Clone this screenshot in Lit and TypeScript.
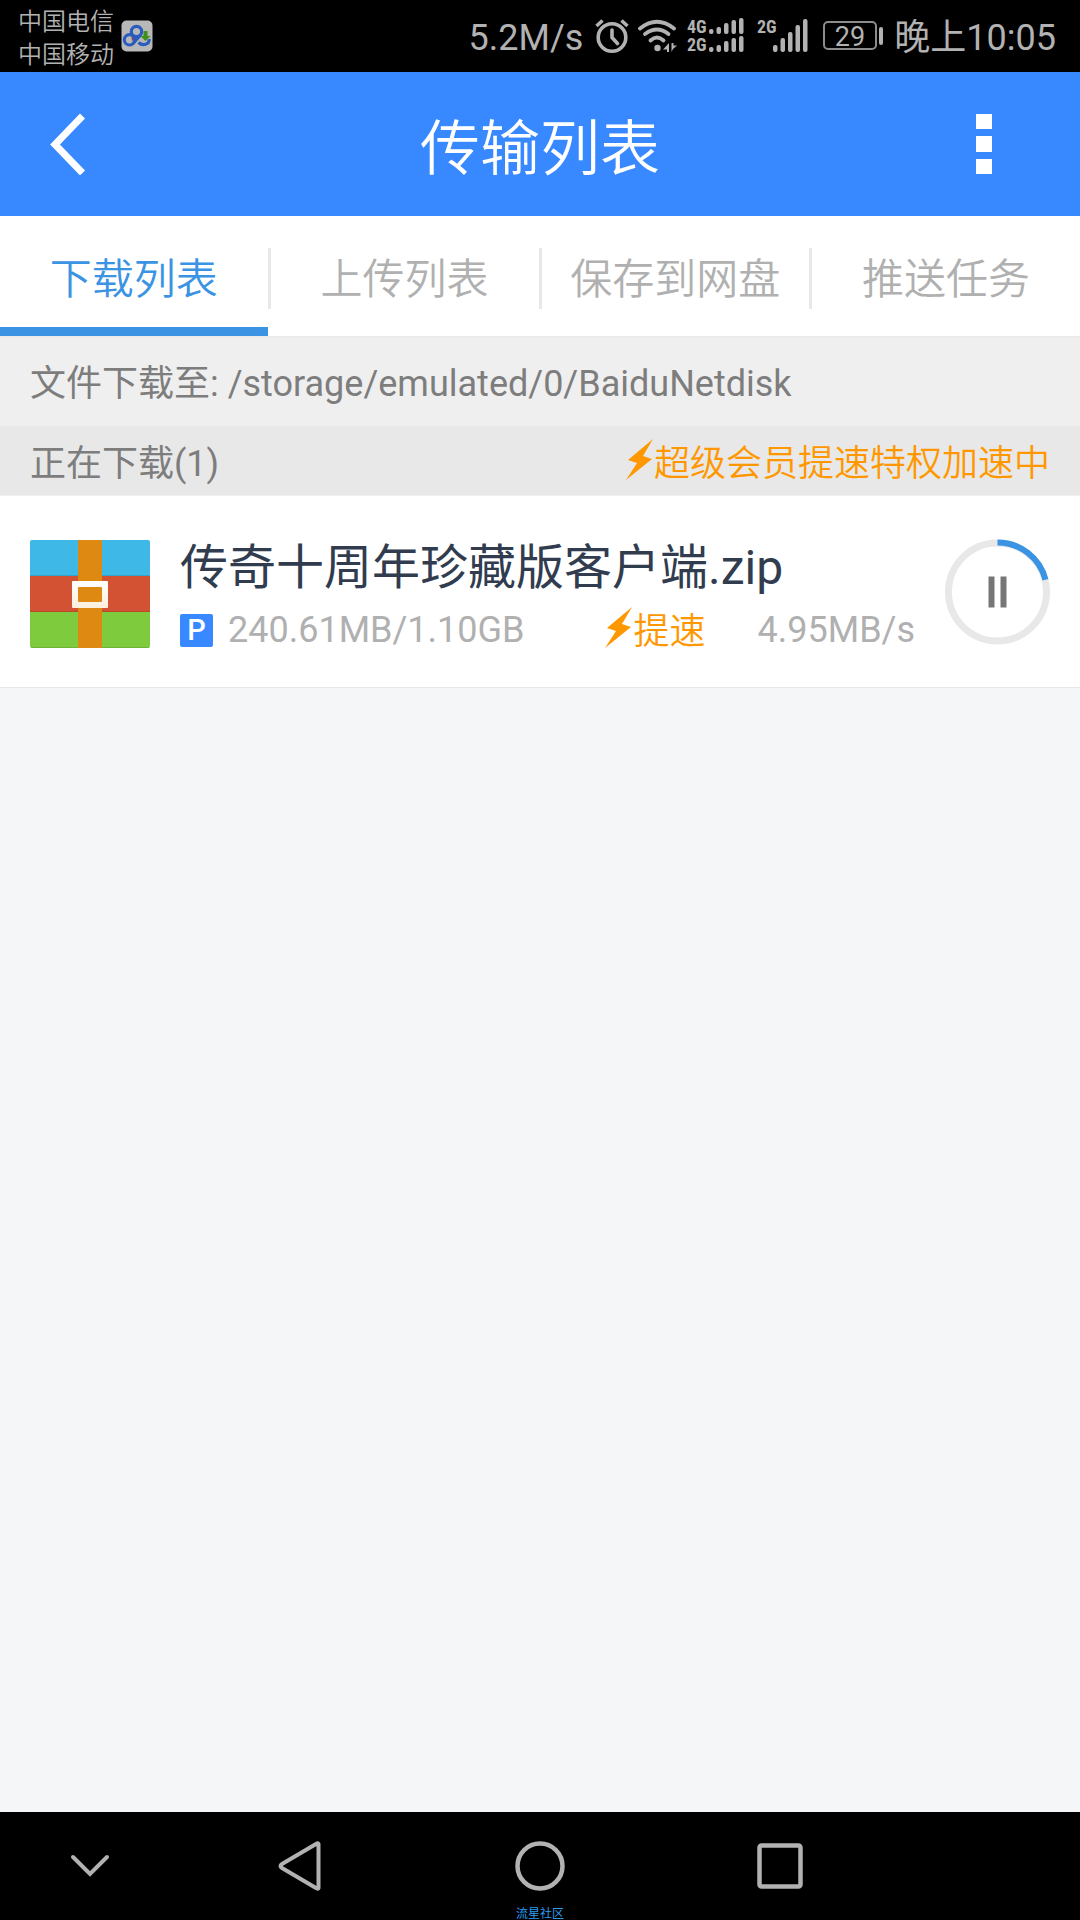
import { LitElement, html, svg, css } from "lit";
import { customElement, property, state } from "lit/decorators.js";
import { classMap } from "lit/directives/class-map.js";

const bolt = html`<svg class="bolt" width="28" height="42" viewBox="0 0 28 42" aria-hidden="true">
  <path d="M27 0 L2 21 L11 24 L0 41 L26 20 L17 17 Z" fill="#ff9800" />
</svg>`;

@customElement("status-bar")
export class StatusBar extends LitElement {
  static styles = css`
    :host {
      display: flex;
      align-items: center;
      justify-content: space-between;
      height: 72px;
      padding: 0 24px 0 18px;
      background: #000;
      color: #b2b2b2;
      font-size: 36px;
      line-height: 42px;
    }
    .side {
      display: flex;
      align-items: center;
    }
    .carriers {
      padding-top: 5px;
      font-size: 24px;
      font-weight: 350;
      line-height: 33px;
      margin-right: 7px;
    }
    .speed,
    time {
      padding-top: 4px;
    }
    .speed {
      margin-right: 12px;
    }
    svg {
      display: block;
      flex: none;
    }
    .alarm,
    .wifi {
      margin-right: 8px;
    }
    .dual {
      margin-right: 12px;
    }
    .single {
      margin-right: 15px;
    }
    .battery {
      margin-right: 10px;
    }
    .net {
      font: bold 18px "Liberation Sans Narrow", "Roboto Condensed", sans-serif;
    }
    .level {
      font: 27px Roboto, sans-serif;
    }
  `;

  private bars(x: number, bottom: number, heights: number[]) {
    return heights.map(
      (h, i) => svg`<rect x=${x + i * 7.5} y=${bottom - h} width="4.5" height=${h} rx="2" />`
    );
  }

  render() {
    return html`
      <div class="side">
        <div class="carriers">
          <div>中国电信</div>
          <div>中国移动</div>
        </div>
        <svg width="32" height="32" viewBox="0 0 32 32" role="img" aria-label="网盘下载">
          <rect x="0.5" y="0.5" width="31" height="31" rx="5" fill="#b8b8b8" />
          <path d="M10 12 L15 16.500 L11 21 Z" fill="#b03a30" />
          <g fill="none" stroke="#2a5cc0" stroke-width="3.2">
            <circle cx="15.500" cy="11.500" r="5.200" />
            <circle cx="8.500" cy="19.800" r="5.200" />
            <path d="M12 23.500 L20 14.500" />
            <path d="M17.500 22.500 Q22 26.500 27 23 Q28.500 21 28.200 19" />
          </g>
          <path d="M22.500 11 h4 v5 h3 l-5 5 l-5 -5 h3 z" fill="#3f8f1c" />
        </svg>
      </div>
      <div class="side">
        <span class="speed">5.2M/s</span>
        <svg class="alarm" width="34" height="36" viewBox="0 0 34 36" fill="none" stroke="#b2b2b2" stroke-width="3.6" aria-hidden="true">
          <circle cx="17" cy="19.500" r="13.800" />
          <path d="M17 12 V19.500 L22.500 25.500" stroke-linecap="round" stroke-linejoin="round" />
          <path d="M1.500 8 L7.500 2.500 M32.500 8 L26.500 2.500" />
        </svg>
        <svg class="wifi" width="41" height="36" viewBox="0 0 41 36" fill="none" stroke="#b2b2b2" stroke-width="3.800" stroke-linecap="round" aria-hidden="true">
          <path d="M3 10.500 Q20 -3 37 10.500" />
          <path d="M8 16 Q20 7 31.500 16" />
          <path d="M13.500 22.500 Q20 16.500 26.500 22.500" />
          <circle cx="20.500" cy="30" r="3.200" fill="#b2b2b2" stroke="none" />
          <path d="M32 25 V34 H30 V31.500 H26 Z M34.500 25 V34 L36 31 L40 27.500 H36.500 V25 Z" fill="#b2b2b2" stroke="none" />
        </svg>
        <svg class="dual" width="58" height="48" viewBox="0 -6 58 48" fill="#b2b2b2" role="img" aria-label="信号">
          <text class="net" x="1" y="15">4G</text>
          <text class="net" x="1" y="33">2G</text>
          ${this.bars(23, 16, [5, 7, 11, 14, 16])}
          ${this.bars(23, 34, [5, 7, 11, 14, 16])}
        </svg>
        <svg class="single" width="52" height="48" viewBox="0 -6 52 48" fill="#b2b2b2" role="img" aria-label="信号">
          <text class="net" x="1" y="15">2G</text>
          ${this.bars(17, 34, [7, 14, 20, 27, 33])}
        </svg>
        <svg class="battery" width="61" height="36" viewBox="0 0 61 36" fill="#b2b2b2" role="img" aria-label="电量 29">
          <rect x="1" y="4" width="52" height="27" rx="4" fill="none" stroke="#8c8c8c" stroke-width="2" />
          <rect x="56" y="9" width="4" height="18" rx="2" />
          <text class="level" x="27" y="28" text-anchor="middle">29</text>
        </svg>
        <time>晚上10:05</time>
      </div>
    `;
  }
}

@customElement("download-item")
export class DownloadItem extends LitElement {
  @property() name = "";
  @property() size = "";
  @property() speed = "";
  @property({ type: Number }) progress = 0;
  @state() private paused = false;

  static styles = css`
    :host {
      display: flex;
      gap: 30px;
      padding: 40px 30px 27px;
      background: #fff;
      border-bottom: 1px solid #e8e8e8;
    }
    svg {
      display: block;
      flex: none;
    }
    .archive {
      margin-top: 4px;
    }
    .info {
      flex: 1;
      min-width: 0;
    }
    .name {
      color: #313c4f;
      font-size: 48px;
      line-height: 64px;
      white-space: nowrap;
      overflow: hidden;
      text-overflow: ellipsis;
    }
    .meta {
      display: flex;
      align-items: center;
      height: 60px;
      color: #b0b0b0;
      font-size: 36px;
      line-height: 60px;
      white-space: nowrap;
    }
    .badge {
      margin-right: 15px;
      width: 33px;
      height: 33px;
      border-radius: 2px;
      background: #3888ff;
      color: #fff;
      font: 500 29px/33px Roboto, sans-serif;
      text-align: center;
    }
    .size {
      flex: 1;
    }
    .boost {
      display: flex;
      align-items: center;
      margin-right: 52px;
      padding: 4px 0 0;
      border: 0;
      background: none;
      color: #ff9800;
      font: inherit;
      font-weight: 350;
    }
    .bolt {
      margin: 0 1px 8px 0;
    }
    .toggle {
      align-self: flex-start;
      margin-top: 3px;
      padding: 0;
      border: 0;
      background: none;
    }
  `;

  render() {
    const round = 2 * Math.PI * 49;
    return html`
      <svg class="archive" width="120" height="108" viewBox="0 0 120 108" aria-hidden="true">
        <defs>
          <linearGradient id="buckle" x2="0" y2="1">
            <stop offset="0" stop-color="#fff" />
            <stop offset="1" stop-color="#fbeedd" />
          </linearGradient>
        </defs>
        <path d="M0 36 V2 Q0 0 2 0 H118 Q120 0 120 2 V36 Z" fill="#3eb9e7" />
        <path d="M0 36 H120 V72 H0 Z" fill="#d35233" />
        <path d="M0 72 H120 V106 Q120 108 118 108 H2 Q0 108 0 106 Z" fill="#7fcb3e" />
        <path d="M0 35.500 H120 M0 71.500 H120 M1 107.500 H119" stroke="#000" stroke-opacity="0.12" />
        <rect x="48" width="24" height="108" fill="#de8a12" />
        <rect x="42" y="41" width="36" height="27" rx="1" fill="url(#buckle)" />
        <rect x="48" y="47" width="24" height="15" rx="1" fill="#de8a12" />
      </svg>
      <div class="info">
        <div class="name">${this.name}</div>
        <div class="meta">
          <span class="badge">P</span>
          <span class="size">${this.size}</span>
          <button class="boost">${bolt}<span>提速</span></button>
          <span>${this.speed}</span>
        </div>
      </div>
      <button
        class="toggle"
        aria-label=${this.paused ? "继续" : "暂停"}
        @click=${() => (this.paused = !this.paused)}
      >
        <svg width="105" height="106" viewBox="0 0 105 106" fill="none">
          <circle cx="52.500" cy="53" r="49" stroke="#e8e8e8" stroke-width="7" />
          <circle
            cx="52.500" cy="53" r="49.500" stroke="#3a93e3" stroke-width="6"
            stroke-dasharray="${this.progress * round} ${round * 2}"
            transform="rotate(-90 52.500 53)"
          />
          ${this.paused
            ? svg`<path d="M43 38 L68 53 L43 68 Z" fill="#767676" />`
            : svg`<path d="M43.500 37.500 h6 v31 h-6 Z M55.500 37.500 h6 v31 h-6 Z" fill="#767676" />`}
        </svg>
      </button>
    `;
  }
}

@customElement("app-root")
export class AppRoot extends LitElement {
  @state() private active = 0;
  private tabs = ["下载列表", "上传列表", "保存到网盘", "推送任务"];

  static styles = css`
    :host {
      display: flex;
      flex-direction: column;
      min-height: 100vh;
      background: #f4f6f8;
      font-family: Roboto, "Noto Sans CJK SC", sans-serif;
      font-weight: 400;
    }
    button {
      padding: 0;
      border: 0;
      background: none;
      font: inherit;
    }
    svg {
      display: block;
      flex: none;
    }
    .header {
      display: grid;
      grid-template-columns: 1fr auto 1fr;
      align-items: center;
      height: 144px;
      padding: 0 50px;
      background: #3888ff;
      color: #fff;
    }
    .title {
      margin: 0;
      padding-top: 12px;
      font-size: 60px;
      font-weight: 350;
      line-height: 72px;
    }
    .more {
      justify-self: end;
      margin-right: 38px;
    }
    .tabs {
      display: flex;
      height: 120px;
      background: #fff;
      border-bottom: 2px solid #ebebeb;
    }
    .tab {
      flex: 1 1 0;
      box-sizing: border-box;
      padding-top: 16px;
      border-bottom: 9px solid transparent;
      color: #b0b0b0;
      font-size: 42px;
      font-weight: 350;
      line-height: 60px;
      white-space: nowrap;
    }
    .rule {
      width: 3px;
      height: 61px;
      margin-top: 32px;
      background: #e8e8e8;
    }
    .active {
      border-color: #3a93e3;
      color: #3a93e3;
    }
    .path,
    .group {
      display: flex;
      align-items: center;
      box-sizing: border-box;
      padding: 4px 30px 0;
      color: #7d7d7d;
      font-size: 36px;
      line-height: 48px;
    }
    .path {
      height: 88px;
      background: #efefef;
    }
    .group {
      justify-content: space-between;
      height: 70px;
      padding-top: 6px;
      background: #e8e8e8;
      border-bottom: 1px solid #efefef;
    }
    .boosting {
      display: flex;
      align-items: center;
      color: #ff9800;
      font-weight: 350;
    }
    .bolt {
      margin-bottom: 8px;
    }
    main {
      flex: 1;
    }
    .nav {
      position: relative;
      display: grid;
      grid-template-columns: 3fr 4fr 4fr 4fr 3fr;
      height: 108px;
      background: #000;
    }
    .key {
      display: grid;
      place-items: center;
    }
    .mark {
      position: absolute;
      inset: auto 0 0;
      color: #2b9cf0;
      font-size: 12px;
      line-height: 12px;
      text-align: center;
    }
  `;

  render() {
    return html`
      <status-bar></status-bar>
      <header class="header">
        <button class="back" aria-label="返回">
          <svg width="36" height="62" viewBox="0 0 36 62" fill="none" stroke="#fff" stroke-width="7">
            <path d="M32.500 3 L5 31.500 L32.500 60" />
          </svg>
        </button>
        <h1 class="title">传输列表</h1>
        <button class="more" aria-label="更多">
          <svg width="16" height="62" viewBox="0 0 16 62" fill="#fff">
            <path d="M0 1 h16 v15 h-16 Z M0 23 h16 v16 h-16 Z M0 46 h16 v15 h-16 Z" />
          </svg>
        </button>
      </header>
      <div class="tabs" role="tablist">
        ${this.tabs.map(
          (label, i) => html`${i ? html`<span class="rule" role="presentation"></span>` : ""}<button
              role="tab"
              aria-selected=${i === this.active ? "true" : "false"}
              class=${classMap({ tab: true, active: i === this.active })}
              @click=${() => (this.active = i)}
            >${label}</button>`
        )}
      </div>
      <div class="path">文件下载至: /storage/emulated/0/BaiduNetdisk</div>
      <div class="group">
        <span>正在下载(1)</span>
        <span class="boosting">${bolt}<span>超级会员提速特权加速中</span></span>
      </div>
      <main>
        <download-item
          name="传奇十周年珍藏版客户端.zip"
          size="240.61MB/1.10GB"
          speed="4.95MB/s"
          .progress=${0.212}
        ></download-item>
      </main>
      <nav class="nav">
        <button class="key" aria-label="收起">
          <svg width="40" height="24" viewBox="0 0 40 24" fill="none" stroke="#b2b2b2" stroke-width="4" stroke-linecap="round">
            <path d="M3 3 L20 20 L37 3" />
          </svg>
        </button>
        <button class="key" aria-label="后退">
          <svg width="44" height="50" viewBox="0 0 44 50" fill="none" stroke="#b2b2b2" stroke-width="4" stroke-linejoin="round">
            <path d="M40.500 3 V47 Q40 48.500 38 47 L4 27 Q1 25 4 23 L38 3 Q40 1.500 40.500 3 Z" />
          </svg>
        </button>
        <button class="key" aria-label="主页">
          <svg width="50" height="50" viewBox="0 0 50 50" fill="none" stroke="#b2b2b2" stroke-width="4.500">
            <circle cx="25" cy="25" r="22.500" />
          </svg>
        </button>
        <button class="key" aria-label="最近任务">
          <svg width="46" height="46" viewBox="0 0 46 46" fill="none" stroke="#b2b2b2" stroke-width="4.500">
            <rect x="2.500" y="2.500" width="41" height="41" rx="2" />
          </svg>
        </button>
        <div class="mark">流星社区</div>
      </nav>
    `;
  }
}
